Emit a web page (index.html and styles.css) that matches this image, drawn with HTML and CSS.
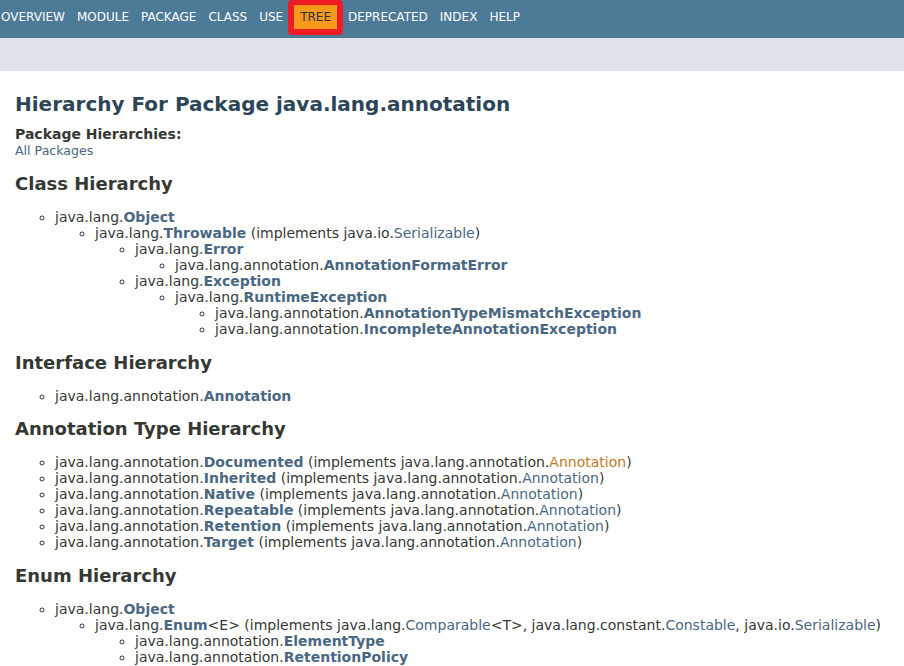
FILE: index.html
```html
<!DOCTYPE html>
<html lang="en">
<head>
<meta charset="utf-8">
<title>java.lang.annotation Class Hierarchy</title>
<link rel="stylesheet" href="styles.css">
</head>
<body>
<header class="flex-header">
  <nav class="top-nav">
    <ul class="nav-list">
      <li>Overview</li>
      <li>Module</li>
      <li>Package</li>
      <li>Class</li>
      <li>Use</li>
      <li class="nav-bar-cell1-rev">Tree</li>
      <li>Deprecated</li>
      <li>Index</li>
      <li>Help</li>
    </ul>
  </nav>
  <div class="sub-nav"></div>
</header>
<main>
  <div class="header">
    <h1 class="title">Hierarchy For Package java.lang.annotation</h1>
    <span class="package-hierarchy-label">Package Hierarchies:</span>
    <ul class="horizontal">
      <li><a href="#">All Packages</a></li>
    </ul>
  </div>
  <section class="hierarchy">
    <h2>Class Hierarchy</h2>
    <ul>
      <li>java.lang.<a href="#" class="type-name-link">Object</a>
        <ul>
          <li>java.lang.<a href="#" class="type-name-link">Throwable</a> (implements java.io.<a href="#">Serializable</a>)
            <ul>
              <li>java.lang.<a href="#" class="type-name-link">Error</a>
                <ul>
                  <li>java.lang.annotation.<a href="#" class="type-name-link">AnnotationFormatError</a></li>
                </ul>
              </li>
              <li>java.lang.<a href="#" class="type-name-link">Exception</a>
                <ul>
                  <li>java.lang.<a href="#" class="type-name-link">RuntimeException</a>
                    <ul>
                      <li>java.lang.annotation.<a href="#" class="type-name-link">AnnotationTypeMismatchException</a></li>
                      <li>java.lang.annotation.<a href="#" class="type-name-link">IncompleteAnnotationException</a></li>
                    </ul>
                  </li>
                </ul>
              </li>
            </ul>
          </li>
        </ul>
      </li>
    </ul>
  </section>
  <section class="hierarchy">
    <h2>Interface Hierarchy</h2>
    <ul>
      <li>java.lang.annotation.<a href="#" class="type-name-link">Annotation</a></li>
    </ul>
  </section>
  <section class="hierarchy">
    <h2>Annotation Type Hierarchy</h2>
    <ul>
      <li>java.lang.annotation.<a href="#" class="type-name-link">Documented</a> (implements java.lang.annotation.<a href="#" class="hovered">Annotation</a>)</li>
      <li>java.lang.annotation.<a href="#" class="type-name-link">Inherited</a> (implements java.lang.annotation.<a href="#">Annotation</a>)</li>
      <li>java.lang.annotation.<a href="#" class="type-name-link">Native</a> (implements java.lang.annotation.<a href="#">Annotation</a>)</li>
      <li>java.lang.annotation.<a href="#" class="type-name-link">Repeatable</a> (implements java.lang.annotation.<a href="#">Annotation</a>)</li>
      <li>java.lang.annotation.<a href="#" class="type-name-link">Retention</a> (implements java.lang.annotation.<a href="#">Annotation</a>)</li>
      <li>java.lang.annotation.<a href="#" class="type-name-link">Target</a> (implements java.lang.annotation.<a href="#">Annotation</a>)</li>
    </ul>
  </section>
  <section class="hierarchy">
    <h2>Enum Hierarchy</h2>
    <ul>
      <li>java.lang.<a href="#" class="type-name-link">Object</a>
        <ul>
          <li>java.lang.<a href="#" class="type-name-link">Enum</a>&lt;E&gt; (implements java.lang.<a href="#">Comparable</a>&lt;T&gt;, java.lang.constant.<a href="#">Constable</a>, java.io.<a href="#">Serializable</a>)
            <ul>
              <li>java.lang.annotation.<a href="#" class="type-name-link">ElementType</a></li>
              <li>java.lang.annotation.<a href="#" class="type-name-link">RetentionPolicy</a></li>
            </ul>
          </li>
        </ul>
      </li>
    </ul>
  </section>
</main>
</body>
</html>
```

FILE: styles.css
```css
html {
  overflow: hidden;
}

body {
  background-color: #ffffff;
  color: #353833;
  font-family: "DejaVu Sans", Arial, Helvetica, sans-serif;
  font-size: 14px;
  margin: 0;
  padding: 0;
}

a:link,
a:visited {
  text-decoration: none;
  color: #4a6782;
}

a.hovered {
  color: #bb7a2a;
}

.top-nav {
  background-color: #4d7a97;
  color: #ffffff;
  height: 33px;
  padding-top: 5px;
  font-size: 12px;
}

.nav-list {
  display: flex;
  margin: 0 0 0 -5px;
  padding: 0;
  list-style: none;
}

.nav-list li {
  padding: 5px 6px;
  text-transform: uppercase;
}

.nav-bar-cell1-rev {
  position: relative;
  background-color: #f8981d;
  color: #253441;
  margin: 0 5px;
}

.nav-bar-cell1-rev::after {
  content: "";
  position: absolute;
  top: -5px;
  left: -6px;
  right: -6px;
  bottom: -6px;
  border: 6px solid #ee1c25;
  border-top-width: 5px;
  border-radius: 4px;
}

.sub-nav {
  background-color: #dee3e9;
  height: 33px;
}

main {
  padding: 11px 20px 10px 15px;
}

.title {
  color: #2c4557;
  font-size: 20px;
  margin: 10px 0;
}

.package-hierarchy-label {
  font-weight: bold;
}

.header ul {
  margin: 0 0 15px 0;
  padding: 0;
}

ul.horizontal li {
  display: inline;
  font-size: 0.9em;
}

h2 {
  font-size: 18px;
  margin: 14.5px 0 15px;
}

.hierarchy ul {
  list-style-type: circle;
}

.type-name-link {
  font-weight: bold;
}
```
